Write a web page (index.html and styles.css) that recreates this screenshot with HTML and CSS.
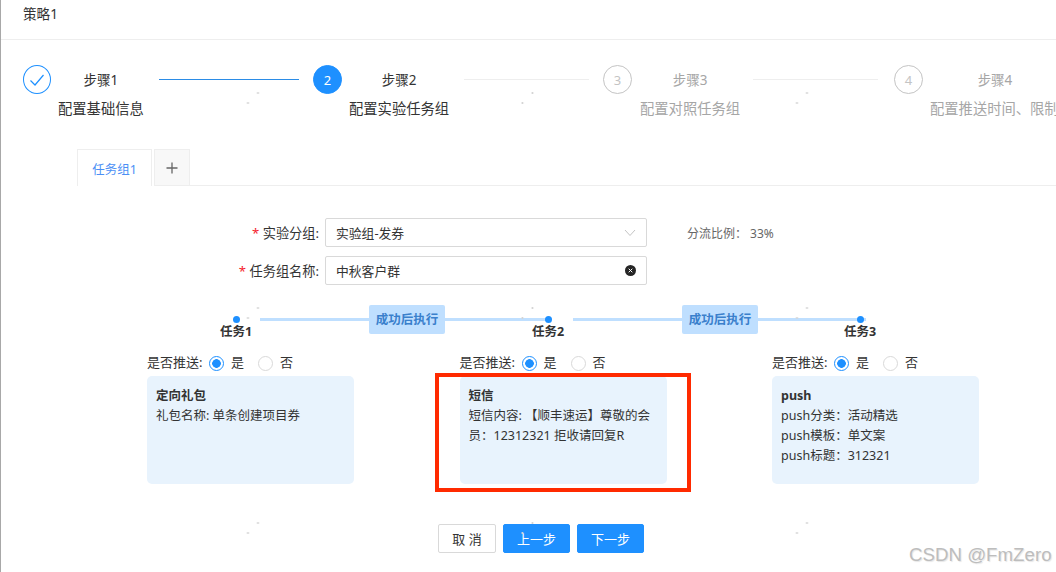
FILE: index.html
```html
<!DOCTYPE html>
<html lang="zh">
<head>
<meta charset="utf-8">
<title>策略1</title>
<link rel="stylesheet" href="styles.css">
</head>
<body>
<div class="page">
  <header class="head">策略1</header>

  <div class="steps">
    <div class="step done">
      <span class="step-icon"><svg width="16" height="14" viewBox="0 0 16 14"><path d="M1.5 7.5 L6 12 L14.5 2" fill="none" stroke="#1e90ff" stroke-width="1.2"/></svg></span>
      <div class="step-text"><div class="step-title">步骤1</div><div class="step-desc">配置基础信息</div></div>
      <span class="step-line line-1"></span>
    </div>
    <div class="step current">
      <span class="step-icon">2</span>
      <div class="step-text"><div class="step-title">步骤2</div><div class="step-desc">配置实验任务组</div></div>
      <span class="step-line line-2"></span>
    </div>
    <div class="step todo">
      <span class="step-icon">3</span>
      <div class="step-text"><div class="step-title">步骤3</div><div class="step-desc">配置对照任务组</div></div>
      <span class="step-line line-3"></span>
    </div>
    <div class="step todo last-step">
      <span class="step-icon">4</span>
      <div class="step-text wide"><div class="step-title">步骤4</div><div class="step-desc">配置推送时间、限制</div></div>
    </div>
  </div>

  <div class="tabs">
    <div class="tab active">任务组1</div>
    <div class="tab add"><svg width="12" height="12" viewBox="0 0 12 12"><path d="M6 .5V11.5M.5 6H11.5" stroke="#666" stroke-width="1.3" fill="none"/></svg></div>
    <div class="tabs-rest"></div>
  </div>

  <div class="form">
    <div class="form-row">
      <label class="form-label"><span class="req">*</span> 实验分组:</label>
      <div class="field">
        <span>实验组-发券</span>
        <svg width="12" height="8" viewBox="0 0 12 8"><path d="M1 1 L6 6.5 L11 1" fill="none" stroke="#c4c4c4" stroke-width="1"/></svg>
      </div>
      <span class="ratio">分流比例： 33%</span>
    </div>
    <div class="form-row">
      <label class="form-label"><span class="req">*</span> 任务组名称:</label>
      <div class="field">
        <span>中秋客户群</span>
        <svg width="11" height="11" viewBox="0 0 11 11"><circle cx="5.5" cy="5.5" r="5.5" fill="#262626"/><path d="M3.7 3.7 L7.3 7.3 M7.3 3.7 L3.7 7.3" stroke="#fff" stroke-width="1" fill="none"/></svg>
      </div>
    </div>
  </div>

  <div class="flow">
    <div class="node"><i class="dot"></i><b>任务1</b></div>
    <div class="link"><i class="bar first"></i><span class="tag">成功后执行</span><i class="bar"></i></div>
    <div class="node"><i class="dot"></i><b>任务2</b></div>
    <div class="link last"><i class="bar first"></i><span class="tag">成功后执行</span><i class="bar"></i></div>
    <div class="node"><i class="dot"></i><b>任务3</b></div>
  </div>

  <div class="tasks">
    <div class="task">
      <div class="push"><span class="push-label">是否推送:</span><i class="radio on"></i><span class="opt">是</span><i class="radio"></i><span class="opt">否</span></div>
      <div class="card"><strong>定向礼包</strong><p>礼包名称: 单条创建项目券</p></div>
    </div>
    <div class="task">
      <div class="push"><span class="push-label">是否推送:</span><i class="radio on"></i><span class="opt">是</span><i class="radio"></i><span class="opt">否</span></div>
      <div class="card"><strong>短信</strong><p>短信内容: 【顺丰速运】尊敬的会员：12312321 拒收请回复R</p></div>
    </div>
    <div class="task">
      <div class="push"><span class="push-label">是否推送:</span><i class="radio on"></i><span class="opt">是</span><i class="radio"></i><span class="opt">否</span></div>
      <div class="card"><strong>push</strong><p>push分类：活动精选</p><p>push模板：单文案</p><p>push标题：312321</p></div>
    </div>
  </div>

  <div class="actions">
    <button class="btn">取 消</button>
    <button class="btn primary">上一步</button>
    <button class="btn primary">下一步</button>
  </div>
</div>
<div class="annotation"></div>
<div class="specks"></div>
<div class="watermark">CSDN @FmZero</div>
</body>
</html>
```
FILE: styles.css
```css
* { box-sizing: border-box; }
html, body { margin: 0; height: 100%; }
body {
  position: relative;
  width: 1056px;
  height: 572px;
  overflow: hidden;
  background: #fff;
  color: #333;
  font-family: "Noto Sans", "Noto Sans CJK SC", sans-serif;
  font-size: 12.5px;
}
.page { height: 572px; border-left: 1px solid #a8a8a8; overflow: hidden; }

.head {
  height: 40px;
  padding: 5px 0 0 22px;
  font-size: 13.6px;
  line-height: 18px;
  border-bottom: 1px solid #eee;
}

.steps {
  display: grid;
  grid-template-columns: 290px 290px 291px 290px;
  padding: 25px 0 0 22px;
  height: 109px;
}
.step { display: flex; align-items: flex-start; white-space: nowrap; }
.step-icon {
  flex: none;
  display: flex;
  align-items: center;
  justify-content: center;
  width: 29px;
  height: 29px;
  margin-right: 7px;
  border-radius: 50%;
  border: 1px solid #c4c4c4;
  color: #c4c4c4;
  font-size: 13px;
}
.done .step-icon { width: 28px; border-color: #1e90ff; }
.current .step-icon { background: #1e90ff; border-color: #1e90ff; color: #fff; }
.todo .step-icon { margin-right: 8px; }
.last-step .step-icon { margin-right: 7px; }
.step-text { text-align: center; }
.step-text.wide { width: 130px; }
.step-text.wide .step-desc { text-align: left; }
.step-title { height: 30px; font-size: 13.5px; line-height: 31px; }
.step-desc { font-size: 14.3px; line-height: 28px; }
.todo .step-title, .todo .step-desc { color: #a6a6a6; }
.step-line { flex: 1; height: 1px; margin: 14px 14px 0 15px; background: #eee; }
.step-line.line-1 { background: #2b8ce6; }
.step-line.line-3 { margin: 14px 16px 0 13px; }

.tabs { display: flex; height: 37px; padding-left: 76px; }
.tab {
  display: flex;
  align-items: center;
  justify-content: center;
  border: 1px solid #eee;
  font-size: 12.5px;
}
.tab.active {
  width: 75px;
  border-bottom: 0;
  color: #4b8ff5;
}
.tab.add {
  width: 36px;
  margin-left: 2px;
  background: #f8f8f8;
}
.tabs-rest { flex: 1; border-bottom: 1px solid #eee; }

.form { padding-top: 32px; font-size: 12.8px; }
.form-row { display: flex; align-items: center; height: 29px; margin-bottom: 9px; }
.form-label {
  width: 318px;
  text-align: right;
  margin-right: 6px;
  font-size: 13.2px;
}
.req { color: #f5222d; }
.field {
  display: flex;
  align-items: center;
  justify-content: space-between;
  width: 322px;
  height: 29px;
  padding: 0 10px;
  border: 1px solid #d9d9d9;
  border-radius: 2px;
}
.ratio { margin-left: 40px; font-size: 12px; color: #666; }

.flow {
  display: grid;
  grid-template-columns: 48px 264px 48px 264px 48px;
  height: 50px;
  margin: 20px 0 0 211px;
}
.node { position: relative; z-index: 1; display: flex; flex-direction: column; align-items: center; padding-top: 11px; }
.dot { width: 7px; height: 7px; border-radius: 50%; background: #1e90ff; }
.node b { font-weight: 700; font-size: 12.5px; line-height: 18px; white-space: nowrap; color: #333; }
.link { display: flex; align-items: flex-start; margin-right: -24px; }
.link.last { margin-left: 1px; margin-right: -30px; }
.bar { display: block; height: 3px; margin-top: 13px; background: #bfdfff; }
.bar.first { width: 109px; flex: none; }
.bar:not(.first) { flex: 1; }
.tag {
  flex: none;
  width: 76px;
  height: 29px;
  line-height: 29px;
  text-align: center;
  border-radius: 2px;
  background: #bfdfff;
  color: #3a80cc;
  font-weight: 700;
  font-size: 12.5px;
}

.tasks {
  display: grid;
  grid-template-columns: repeat(3, 207px);
  column-gap: 105.5px;
  margin: 0 0 0 146px;
}
.push { display: flex; align-items: center; height: 21px; padding-bottom: 5px; font-size: 13px; line-height: 16px; }
.push-label { width: 62px; padding-bottom: 2px; }
.radio {
  flex: none;
  width: 15px;
  height: 15px;
  border-radius: 50%;
  border: 1px solid #d9d9d9;
  background: #fff;
}
.radio.on { border-color: #1e90ff; background: radial-gradient(circle, #1e90ff 0 4px, #fff 4.6px); }
.opt { margin: 0 14px 2px 7px; }
.card {
  height: 108px;
  padding: 10px 9px;
  border-radius: 5px;
  background: #e8f3fd;
  line-height: 20px;
}
.card strong { display: block; font-weight: 700; }
.card p { margin: 0; }

.actions { display: flex; gap: 7px; padding: 40px 0 0 437px; }
.btn {
  height: 29px;
  width: 67px;
  padding: 0;
  border: 1px solid #1e90ff;
  border-radius: 2px;
  background: #1e90ff;
  color: #fff;
  font: inherit;
  font-size: 13px;
}
.btn:first-child { width: 58px; background: #fff; border-color: #d9d9d9; color: #333; }

.annotation {
  position: absolute;
  left: 435px;
  top: 373px;
  width: 256px;
  height: 119px;
  border: 4px solid #ff2a00;
}
.specks {
  position: absolute;
  inset: 0;
  pointer-events: none;
  background-image:
    radial-gradient(circle at 258px 93px, #d4d4d4 .8px, transparent 1.3px),
    radial-gradient(circle at 248px 103px, #d4d4d4 .8px, transparent 1.3px);
  background-size: 274.5px 215px;
}
.watermark {
  position: absolute;
  left: 909px;
  top: 543px;
  font-family: "Liberation Sans", sans-serif;
  font-size: 18.7px;
  line-height: 24px;
  color: #bdbdbd;
  text-shadow: 1px 1px 1px #e6e6e6;
  white-space: nowrap;
}
```
